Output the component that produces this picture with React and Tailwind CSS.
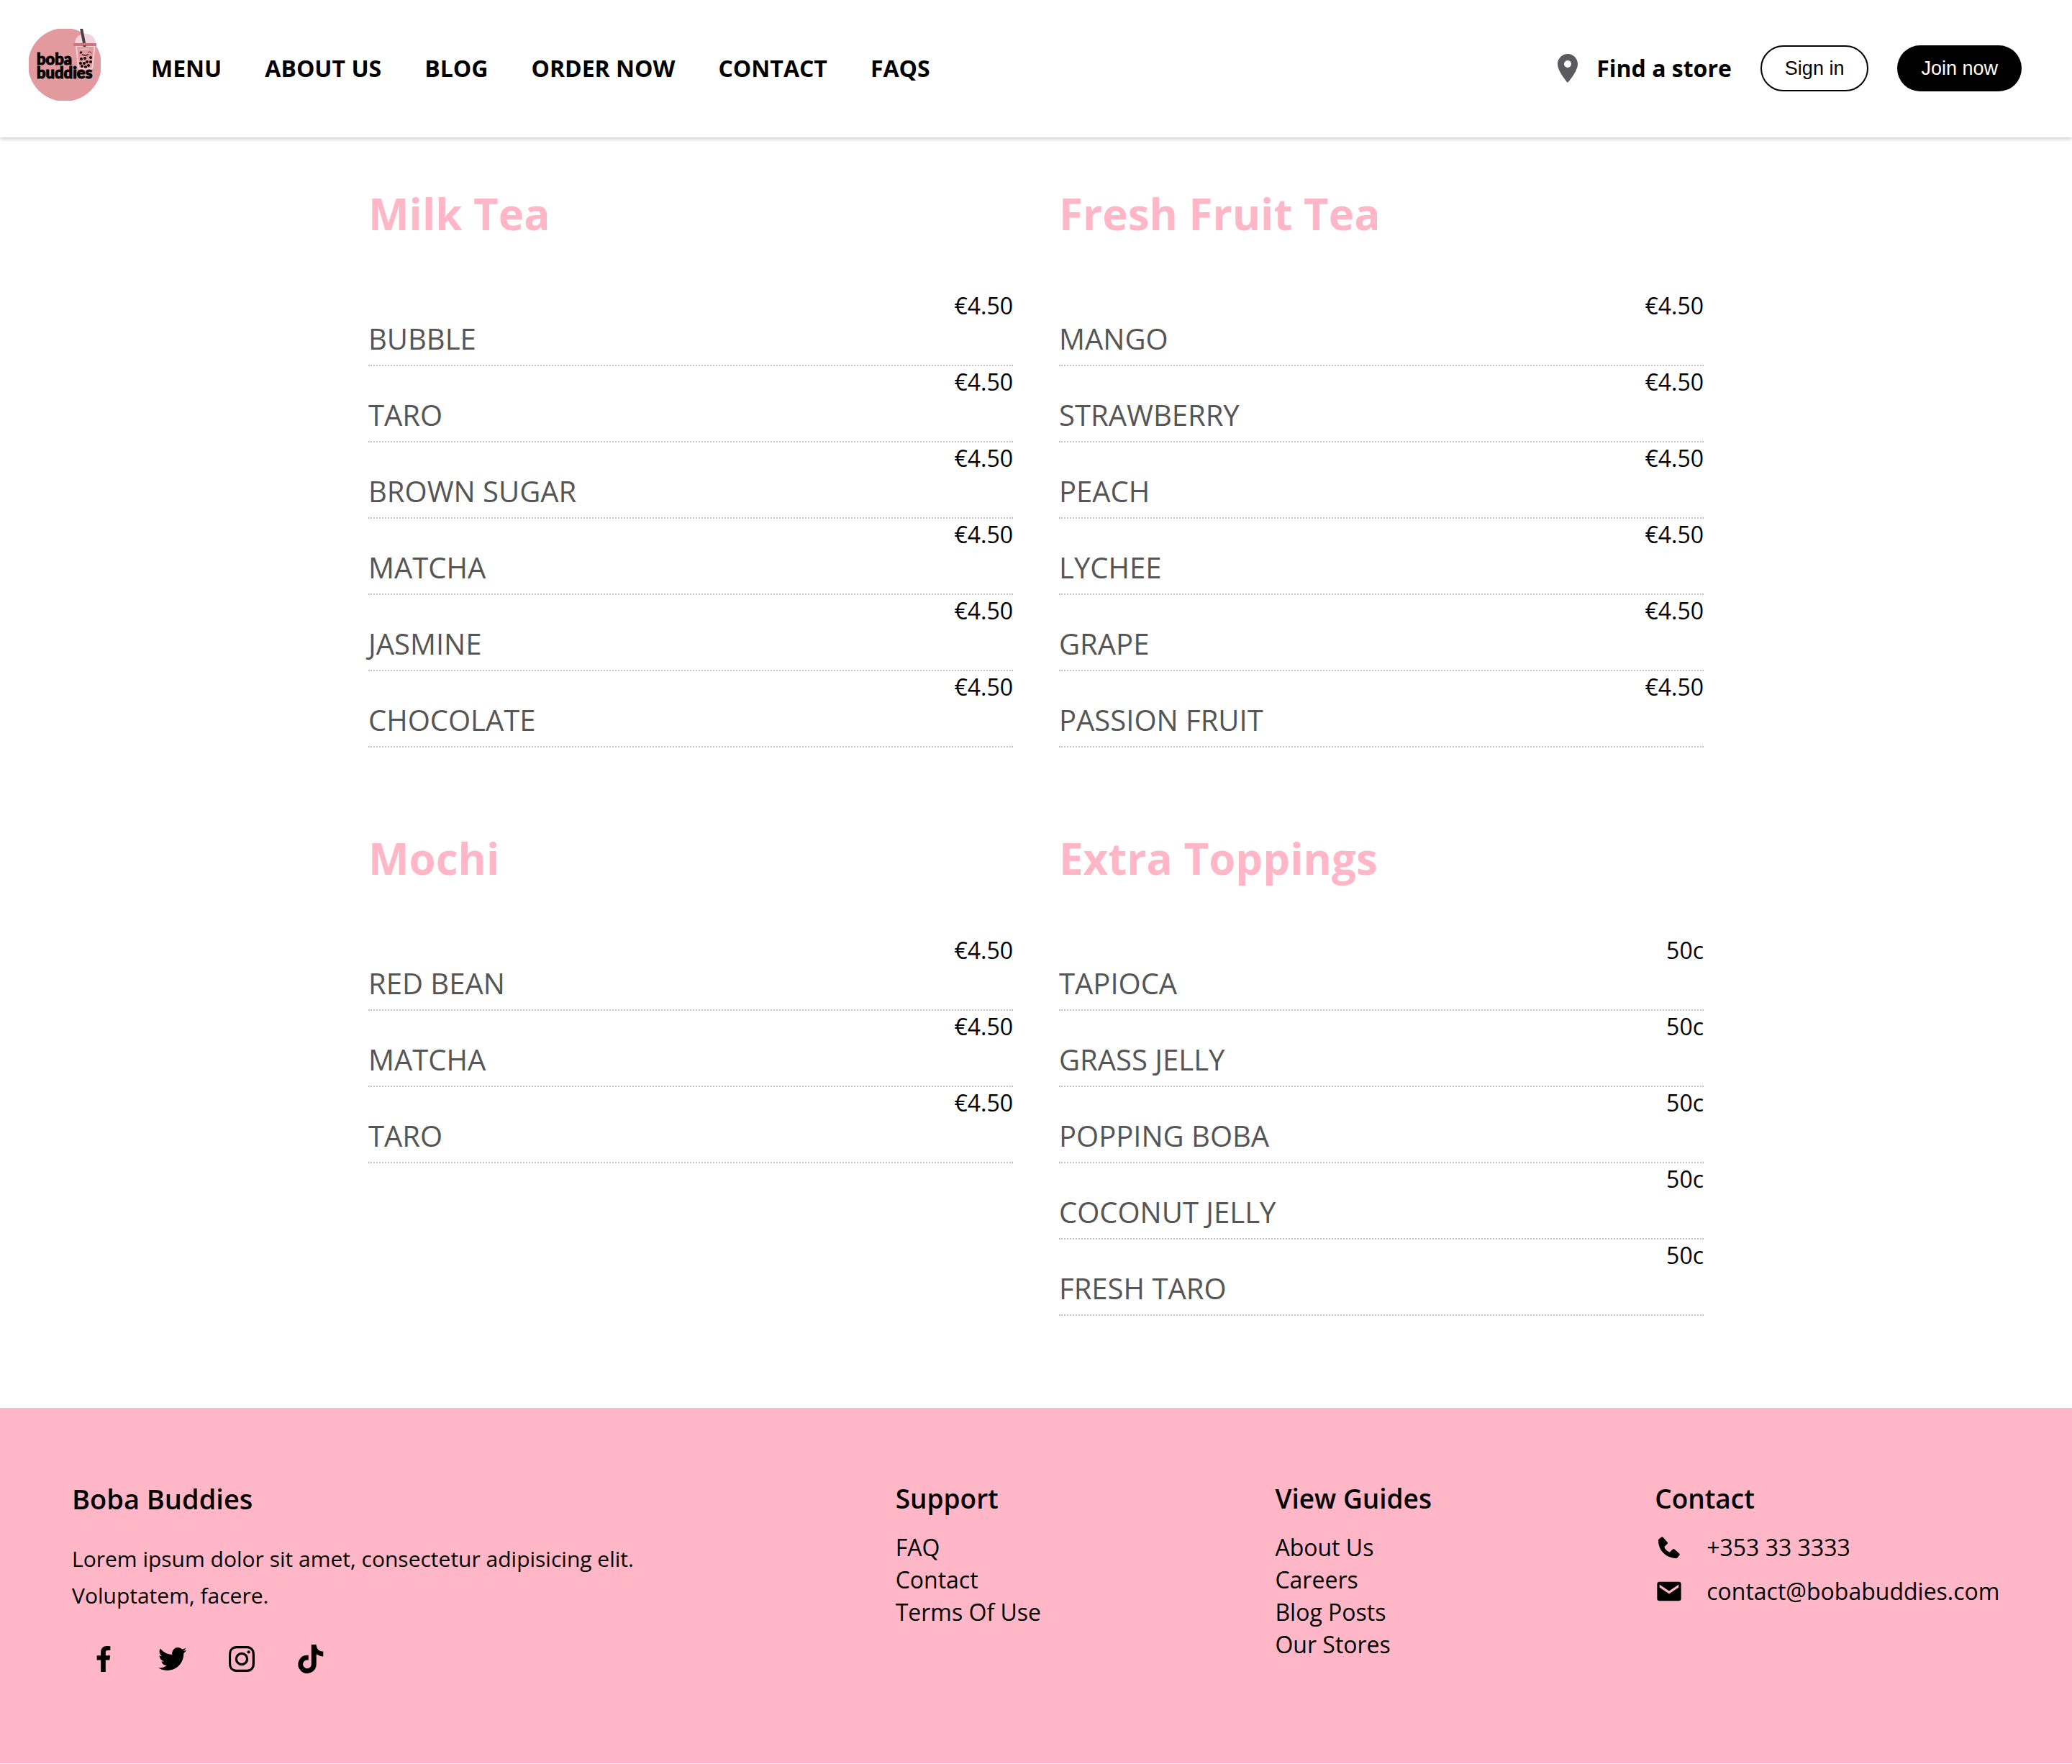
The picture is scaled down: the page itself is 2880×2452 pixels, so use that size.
import React from "react";
import { MdLocationOn } from "react-icons/md";
import {
  BiLogoFacebook,
  BiLogoTwitter,
  BiLogoInstagram,
  BiLogoTiktok,
  BiSolidPhone,
  BiSolidEnvelope,
} from "react-icons/bi";

const NAV = ["MENU", "ABOUT US", "BLOG", "ORDER NOW", "CONTACT", "FAQS"];

const MENU = [
  {
    title: "Milk Tea",
    price: "€4.50",
    items: ["BUBBLE", "TARO", "BROWN SUGAR", "MATCHA", "JASMINE", "CHOCOLATE"],
  },
  {
    title: "Fresh Fruit Tea",
    price: "€4.50",
    items: ["MANGO", "STRAWBERRY", "PEACH", "LYCHEE", "GRAPE", "PASSION FRUIT"],
  },
  { title: "Mochi", price: "€4.50", items: ["RED BEAN", "MATCHA", "TARO"] },
  {
    title: "Extra Toppings",
    price: "50c",
    items: ["TAPIOCA", "GRASS JELLY", "POPPING BOBA", "COCONUT JELLY", "FRESH TARO"],
  },
];

const SOCIAL = [
  { label: "Facebook", Icon: BiLogoFacebook },
  { label: "Twitter", Icon: BiLogoTwitter },
  { label: "Instagram", Icon: BiLogoInstagram },
  { label: "TikTok", Icon: BiLogoTiktok },
];

const LINKS = [
  { title: "Support", links: ["FAQ", "Contact", "Terms Of Use"] },
  { title: "View Guides", links: ["About Us", "Careers", "Blog Posts", "Our Stores"] },
];

const CONTACTS = [
  { text: "+353 33 3333", href: "tel:+353333333", Icon: BiSolidPhone },
  {
    text: "contact@bobabuddies.com",
    href: "mailto:contact@bobabuddies.com",
    Icon: BiSolidEnvelope,
  },
];

const PEARLS = [
  [113, 82], [118, 81], [126, 80],
  [112, 88], [117, 88], [121, 86], [126, 86],
  [114, 92], [119, 93], [123, 91],
];

function Logo() {
  return (
    <svg viewBox="40 40 100 100" className="size-[100px]" role="img" aria-label="boba buddies">
      <circle cx="90" cy="90" r="51" fill="#e29a9f" />
      {/* cup */}
      <path d="M104 61 C104 42 133 42 133 61 Z" fill="#f4d3e0" />
      <path d="M111 39 L115 39 L119 60 L115 60 Z" fill="#45413f" />
      <path
        d="M106 64 L131.5 64 L128.5 94 Q128 95.5 126 95.5 L112 95.5 Q109.5 95.5 109 94 Z"
        fill="#e29a9f"
        stroke="#f7d3da"
        strokeWidth="1.8"
      />
      <rect x="102" y="60" width="32" height="4" rx="1" fill="#c9777f" />
      <rect x="115.5" y="63" width="4" height="2" fill="#5a4a4a" />
      <path d="M111 68.5h13" stroke="#edb9bf" strokeWidth="1.5" />
      {/* face */}
      <circle cx="112.5" cy="73" r="1.8" fill="#1c1414" />
      <path d="M122 73.5q2-3 4.5-1v2" fill="none" stroke="#5a3438" strokeWidth="1" />
      <path d="M114 75.5q4.5 3 9 0" fill="none" stroke="#1c1414" strokeWidth="1.3" />
      <circle cx="111.5" cy="77" r="1.8" fill="#f08a96" />
      <circle cx="125.5" cy="76.5" r="1.8" fill="#f08a96" />
      {PEARLS.map(([x, y]) => (
        <circle key={`${x}-${y}`} cx={x} cy={y} r="2" fill="#0c0808" />
      ))}
      <text y="90" fontSize="22" fontWeight="900" fontFamily="Lato, sans-serif" stroke="#000" strokeWidth="1">
        <tspan x="51">boba</tspan>
        <tspan x="51" dy="19">buddies</tspan>
      </text>
    </svg>
  );
}

function MenuSection({ title, price, items }) {
  return (
    <section>
      <h2 className="mb-[60px] text-[60px] leading-[92px] font-bold text-[#ffb6c6]">{title}</h2>
      <ul>
        {items.map((item) => (
          <li key={item} className="flex flex-col border-b-2 border-dotted border-[#c4c4c4] pb-3">
            <span className="self-end text-[32px] leading-[44px]">{price}</span>
            <span className="text-[40px] leading-[48px] text-[#555555]">{item}</span>
          </li>
        ))}
      </ul>
    </section>
  );
}

export default function App() {
  return (
    <div className="min-h-screen bg-white font-['Open_Sans',sans-serif] text-black">
      <header className="flex items-center pt-10 pr-[70px] pb-[41px] pl-10 shadow-[0_2px_6px_rgba(0,0,0,0.1),0_4px_4px_rgba(0,0,0,0.06),0_0_4px_rgba(0,0,0,0.07)]">
        <a href="#" className="mb-[10px] block size-[100px] shrink-0">
          <Logo />
        </a>
        <nav className="ml-[70px]">
          <ul className="flex gap-[60px] text-[32px] leading-[44px] font-bold">
            {NAV.map((item) => (
              <li key={item}>
                <a href="#">{item}</a>
              </li>
            ))}
          </ul>
        </nav>
        <div className="ml-auto flex items-center gap-10">
          <a href="#" className="flex items-center gap-4 text-[32px] leading-[44px] font-bold">
            <MdLocationOn className="size-12 text-[#5b5b5f]" />
            Find a store
          </a>
          <button
            type="button"
            className="h-16 rounded-full border-2 border-black px-8 font-['Liberation_Sans',sans-serif] text-[27px] leading-[30px]"
          >
            Sign in
          </button>
          <button
            type="button"
            className="h-16 rounded-full bg-black px-[33px] font-['Liberation_Sans',sans-serif] text-[27px] leading-[30px] text-white"
          >
            Join now
          </button>
        </div>
      </header>

      <main className="mx-auto grid w-full max-w-[1856px] grid-cols-2 gap-x-16 gap-y-[108px] pt-[60px] pb-32">
        {MENU.map((section) => (
          <MenuSection key={section.title} {...section} />
        ))}
      </main>

      <footer className="grid grid-cols-[16fr_7fr_7fr_7fr] gap-12 bg-[#ffb6c6] px-[100px] pt-[100px] pb-[121px]">
        <div>
          <h3 className="mb-8 text-[38px] leading-[52px] font-semibold">Boba Buddies</h3>
          <p className="max-w-4/5 text-[30px] leading-[51px]">
            Lorem ipsum dolor sit amet, consectetur adipisicing elit. Voluptatem, facere.
          </p>
          <ul className="mt-[39px] ml-5 flex gap-12">
            {SOCIAL.map(({ label, Icon }) => (
              <li key={label}>
                <a href="#" aria-label={label}>
                  <Icon className="size-12" />
                </a>
              </li>
            ))}
          </ul>
        </div>
        {LINKS.map(({ title, links }) => (
          <div key={title}>
            <h3 className="mb-5 text-[37px] leading-[51px] font-semibold">{title}</h3>
            <ul className="text-[32px] leading-[45px]">
              {links.map((link) => (
                <li key={link}>
                  <a href="#">{link}</a>
                </li>
              ))}
            </ul>
          </div>
        ))}
        <div>
          <h3 className="mb-5 text-[37px] leading-[51px] font-semibold">Contact</h3>
          <ul className="flex flex-col gap-4 text-[32px] leading-[45px]">
            {CONTACTS.map(({ text, href, Icon }) => (
              <li key={text}>
                <a href={href} className="flex items-center gap-8">
                  <Icon className="size-10 shrink-0" />
                  {text}
                </a>
              </li>
            ))}
          </ul>
        </div>
      </footer>
    </div>
  );
}
